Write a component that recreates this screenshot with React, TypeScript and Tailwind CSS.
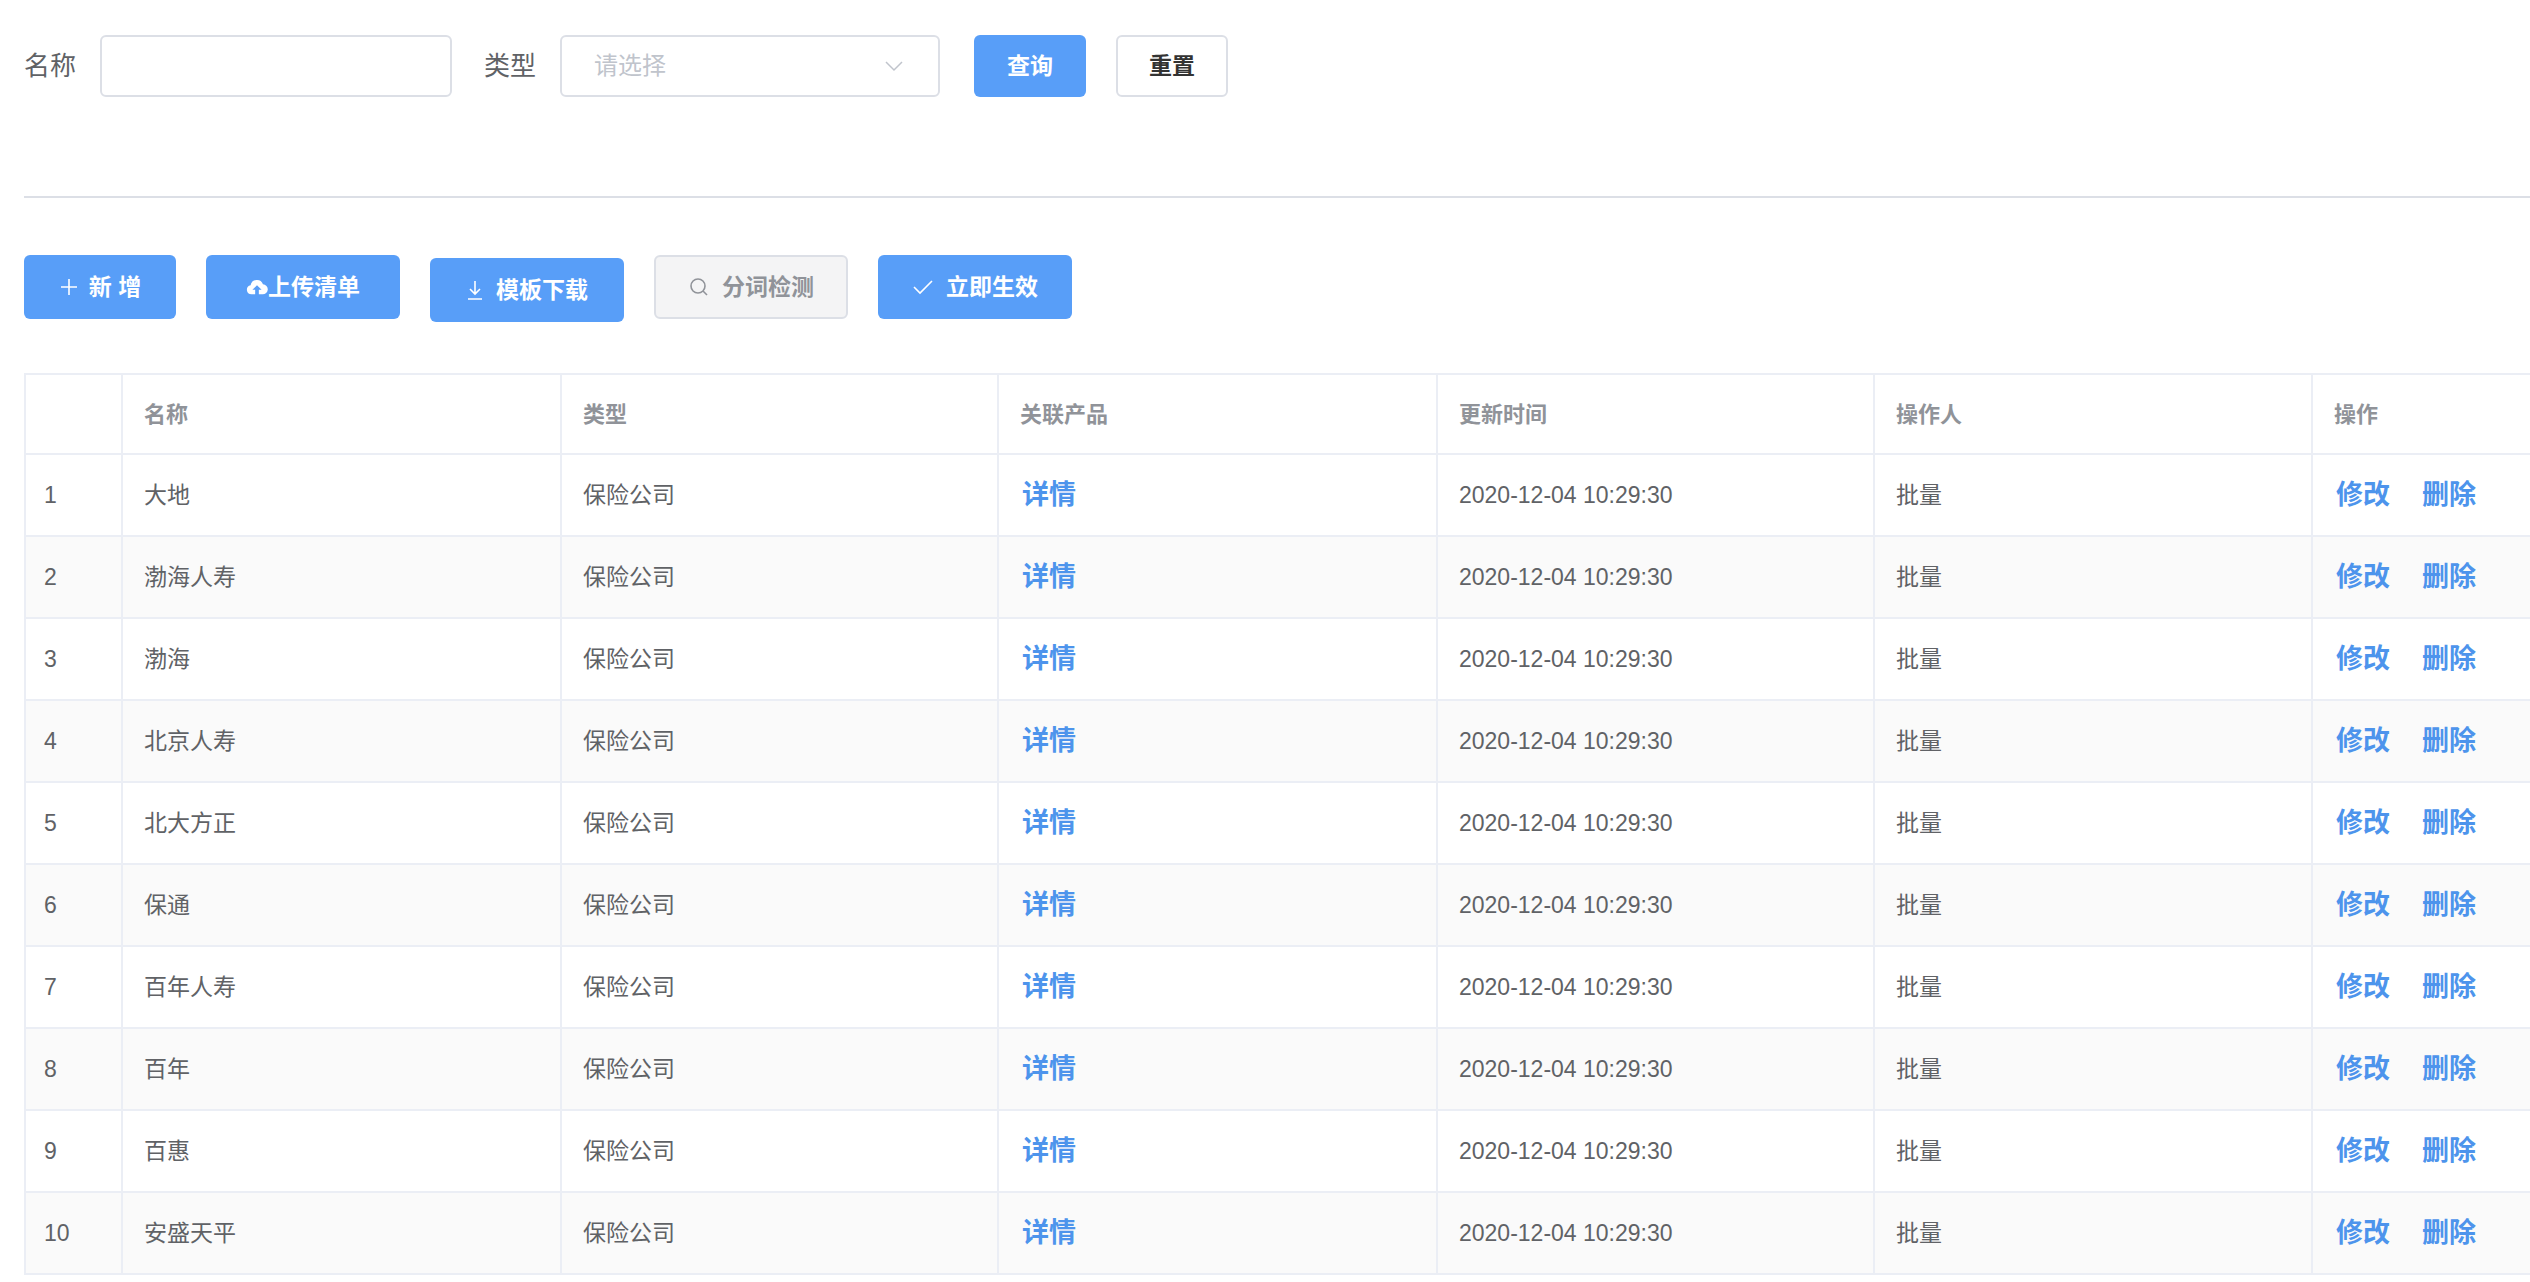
import React from "react";

const rows = ["大地","渤海人寿","渤海","北京人寿","北大方正","保通","百年人寿","百年","百惠","安盛天平"];
const cols = ["w-[97px]","w-[439px]","w-[437px]","w-[439px]","w-[437px]","w-[438px]","w-[438px]"];

export default function App() {
  return (
    <div className="w-[2530px] h-[1282px] overflow-hidden bg-white text-[#606266]" style={{ fontFamily: '"Liberation Sans","Noto Sans CJK SC",sans-serif' }}>
      <div className="flex items-center h-[62px] mt-[35px] pl-[24px]">
        <span className="text-[26px] text-[#606266] mr-[24px]">名称</span>
        <div className="w-[352px] h-[62px] border-2 border-[#dcdfe6] rounded-[6px]" />
        <span className="text-[26px] text-[#606266] ml-[32px] mr-[24px]">类型</span>
        <div className="w-[380px] h-[62px] border-2 border-[#dcdfe6] rounded-[6px] flex items-center justify-between px-[32px]">
          <span className="text-[24px] text-[#c0c4cc]">请选择</span>
          <svg width="24" height="24" viewBox="0 0 24 24" fill="none" stroke="#c0c4cc" strokeWidth="1.5"><path d="M4 8l8 8 8-8" /></svg>
        </div>
        <div className="ml-[34px] w-[112px] h-[62px] rounded-[6px] bg-[#589ef8] text-white text-[23px] font-bold flex items-center justify-center">查询</div>
        <div className="ml-[30px] w-[112px] h-[62px] rounded-[6px] border-2 border-[#dcdfe6] text-[#333] text-[23px] font-bold flex items-center justify-center">重置</div>
      </div>
      <div className="ml-[24px] mt-[99px] h-[2px] bg-[#dcdfe6]" />
      <div className="flex items-start pl-[24px] mt-[57px] h-[66px] gap-[30px]">
        <div className="w-[152px] h-[64px] rounded-[6px] bg-[#589ef8] text-white text-[23px] font-bold flex items-center justify-center gap-[10px]">
          <svg width="20" height="20" viewBox="0 0 20 20" stroke="white" strokeWidth="1.6"><path d="M10 2v16M2 10h16" /></svg>新 增
        </div>
        <div className="w-[194px] h-[64px] rounded-[6px] bg-[#589ef8] text-white text-[23px] font-bold flex items-center justify-center">
          <svg width="22" height="20" viewBox="0 0 24 20" fill="white"><path d="M6 18a5 5 0 01-1-9.9A7 7 0 0118.5 7 5.5 5.5 0 0118 18h-4v-5h3l-5-5-5 5h3v5z" /></svg>上传清单
        </div>
        <div className="w-[194px] h-[64px] mt-[3px] rounded-[6px] bg-[#589ef8] text-white text-[23px] font-bold flex items-center justify-center gap-[12px]">
          <svg width="18" height="22" viewBox="0 0 18 22" fill="none" stroke="white" strokeWidth="1.6"><path d="M9 2v13M4 10l5 5 5-5M2 20h14" /></svg>模板下载
        </div>
        <div className="w-[194px] h-[64px] rounded-[6px] bg-[#f4f4f5] border-2 border-[#dcdfe6] text-[#909399] text-[23px] font-bold flex items-center justify-center gap-[12px]">
          <svg width="22" height="22" viewBox="0 0 22 22" fill="none" stroke="#909399" strokeWidth="1.6"><circle cx="10" cy="10" r="7" /><path d="M15 15l4 4" /></svg>分词检测
        </div>
        <div className="w-[194px] h-[64px] rounded-[6px] bg-[#589ef8] text-white text-[23px] font-bold flex items-center justify-center gap-[12px]">
          <svg width="22" height="20" viewBox="0 0 22 20" fill="none" stroke="white" strokeWidth="1.6"><path d="M2 10l6 6 12-12" /></svg>立即生效
        </div>
      </div>
      <div className="ml-[24px] mt-[52px] border-t-2 border-l-2 border-[#ebeef5] w-[2900px]">
        <div className="flex h-[80px] border-b-2 border-[#ebeef5] text-[22px] font-bold text-[#909399]">
          {["", "名称", "类型", "关联产品", "更新时间", "操作人", "操作"].map((h, i) => (
            <div key={i} className={`${cols[i]} shrink-0 border-r-2 border-[#ebeef5] flex items-center pl-[21px]`}>{h}</div>
          ))}
        </div>
        {rows.map((n, r) => (
          <div key={r} className={`flex h-[82px] border-b-2 border-[#ebeef5] text-[23px] ${r % 2 ? "bg-[#fafafa]" : "bg-white"}`}>
            <div className={`${cols[0]} shrink-0 border-r-2 border-[#ebeef5] flex items-center pl-[18px]`}>{r + 1}</div>
            <div className={`${cols[1]} shrink-0 border-r-2 border-[#ebeef5] flex items-center pl-[21px]`}>{n}</div>
            <div className={`${cols[2]} shrink-0 border-r-2 border-[#ebeef5] flex items-center pl-[21px]`}>保险公司</div>
            <div className={`${cols[3]} shrink-0 border-r-2 border-[#ebeef5] flex items-center pl-[23px] text-[27px] font-bold text-[#4d94ec]`}>详情</div>
            <div className={`${cols[4]} shrink-0 border-r-2 border-[#ebeef5] flex items-center pl-[21px]`}>2020-12-04 10:29:30</div>
            <div className={`${cols[5]} shrink-0 border-r-2 border-[#ebeef5] flex items-center pl-[21px]`}>批量</div>
            <div className={`${cols[6]} shrink-0 border-r-2 border-[#ebeef5] flex items-center pl-[23px] gap-[32px] text-[27px] font-bold text-[#4d94ec]`}><span>修改</span><span>删除</span></div>
          </div>
        ))}
      </div>
    </div>
  );
}
